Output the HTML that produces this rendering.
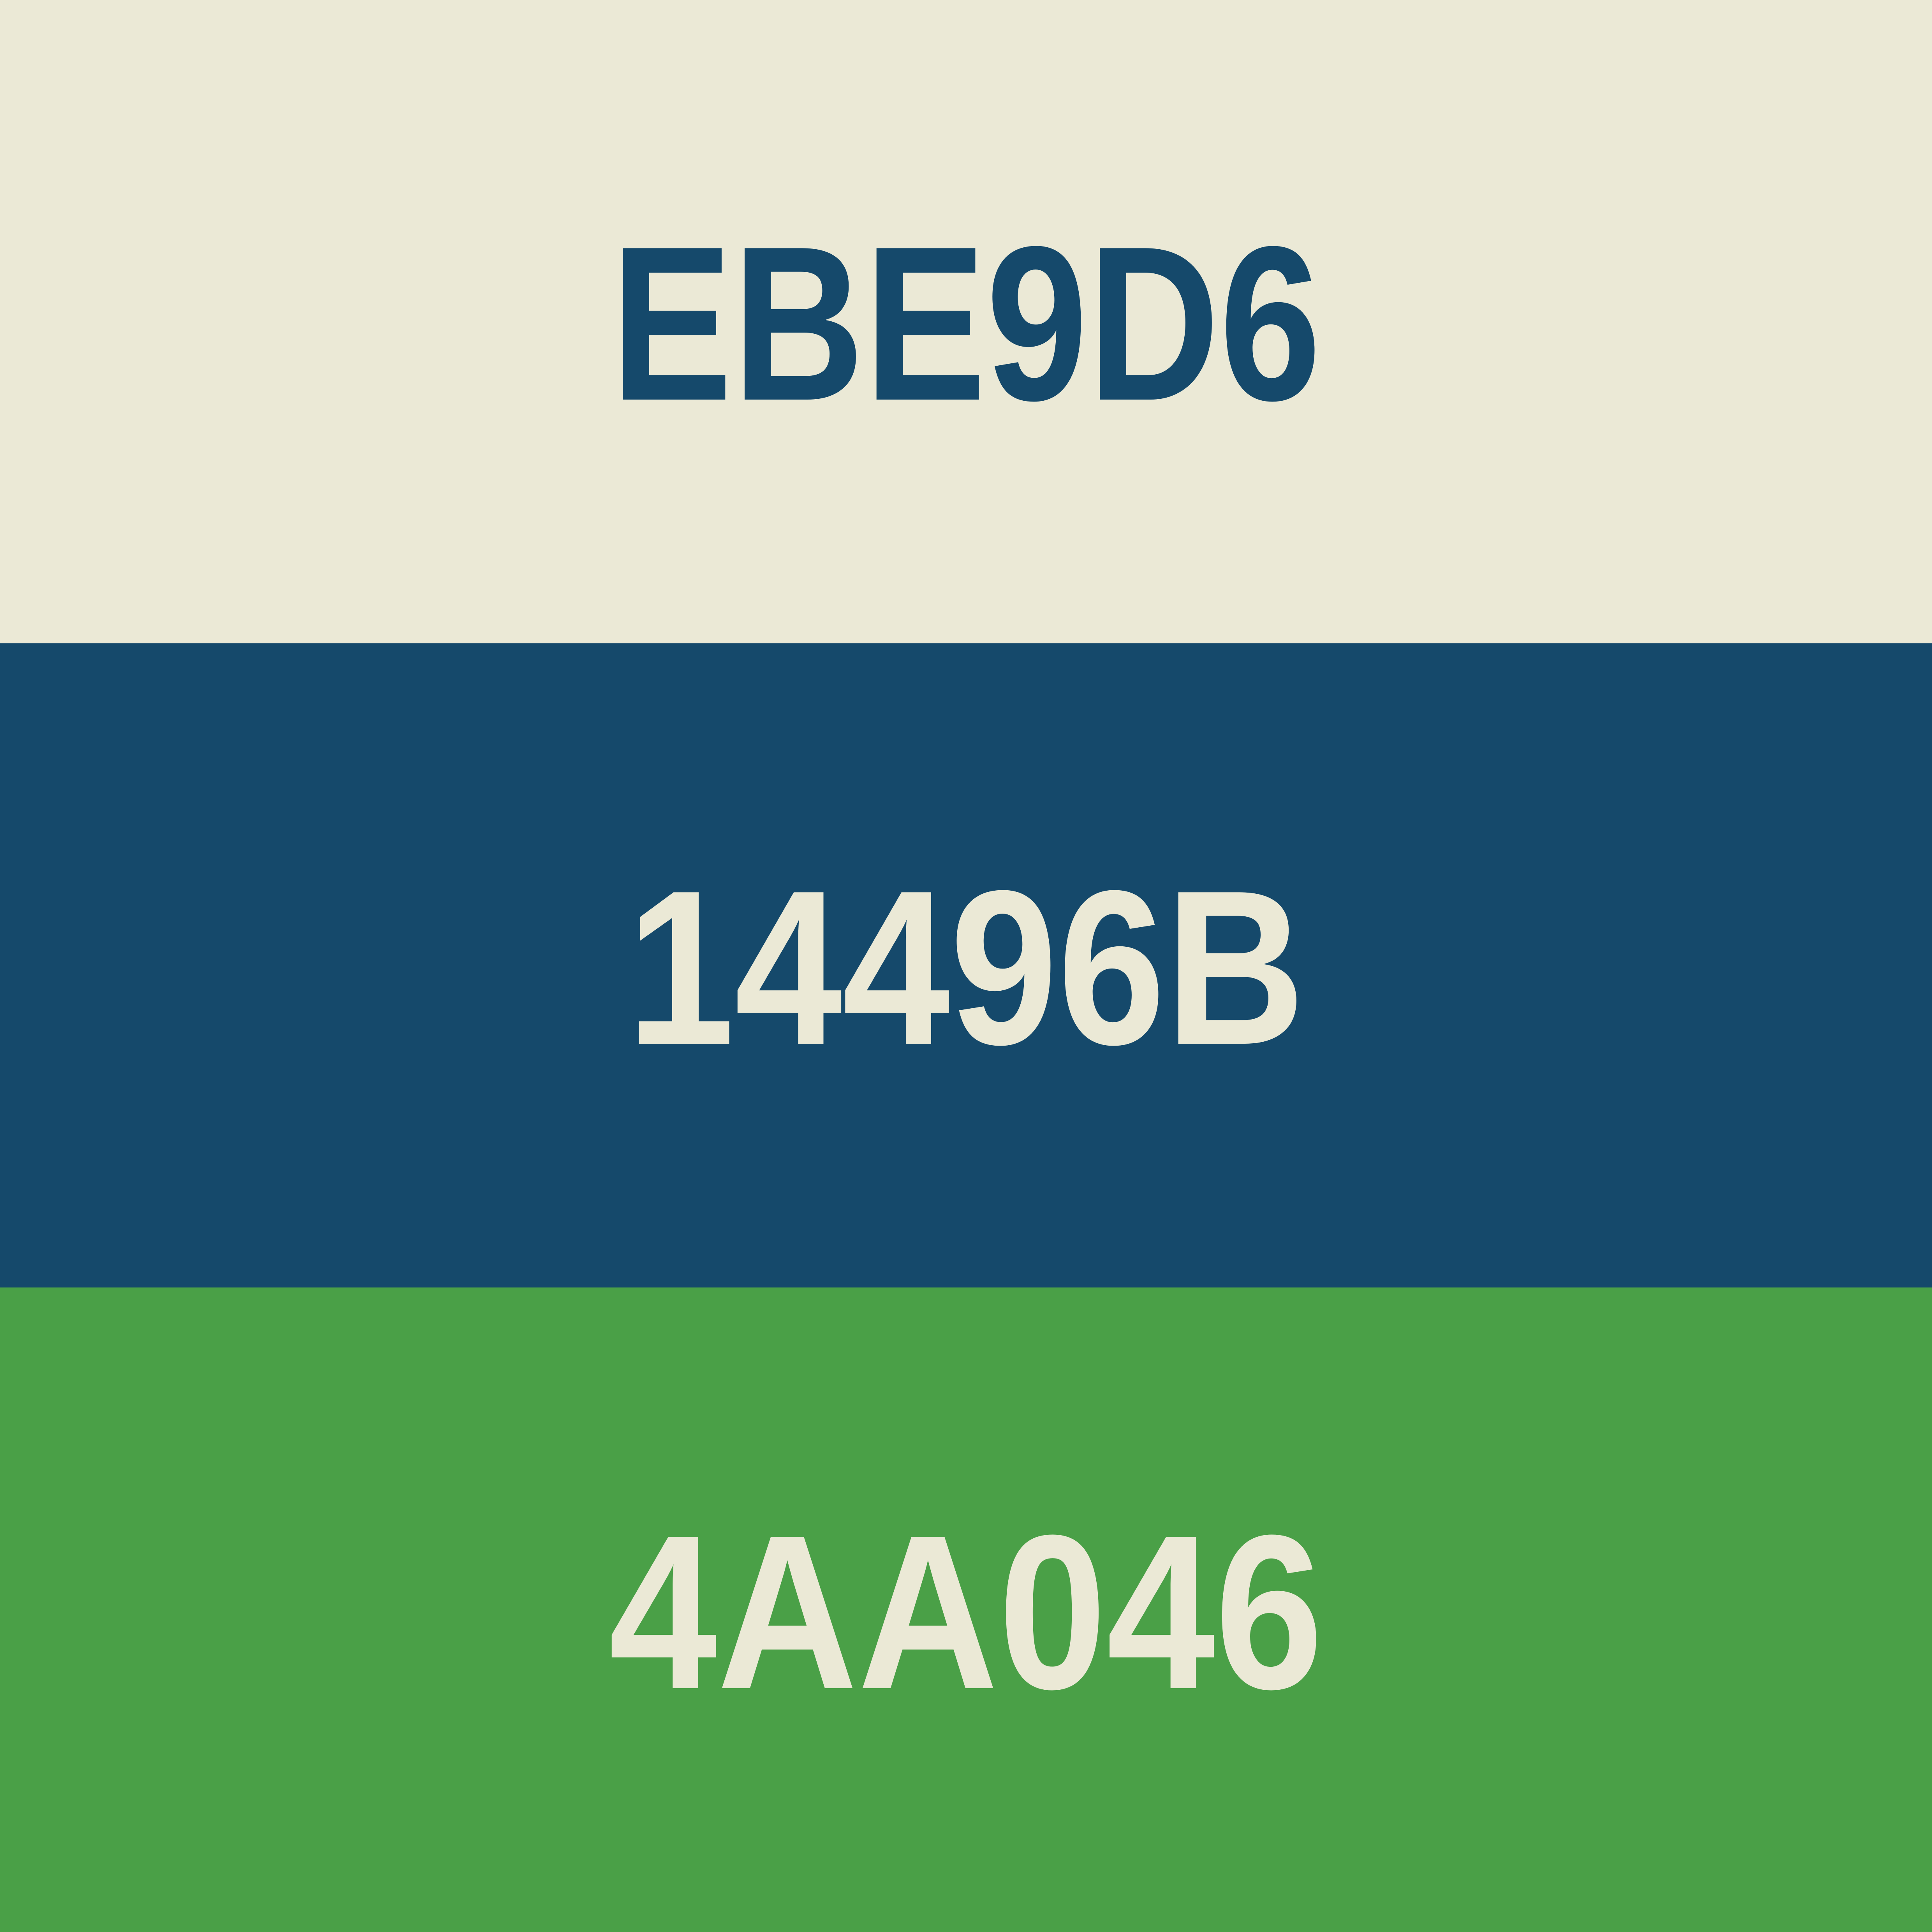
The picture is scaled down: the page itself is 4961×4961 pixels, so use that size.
<!DOCTYPE html>
<html><head><meta charset="utf-8"><style>
html,body{margin:0;padding:0;width:4961px;height:4961px;overflow:hidden;background:#EBE9D6}
.b{position:absolute;left:0;width:4961px}
.t{position:absolute;left:0;width:4961px;text-align:center;font-family:"Liberation Sans",sans-serif;font-weight:bold;font-size:565px;line-height:1}
.t span{display:inline-block;transform-origin:center}
</style></head><body>
<div class="b" style="top:0;height:1652px;background:#EBE9D6"></div>
<div class="b" style="top:1652px;height:1654px;background:#15496B"></div>
<div class="b" style="top:3306px;height:1655px;background:#4AA047"></div>
<div class="t" style="top:548px;color:#15496B"><span style="transform:scaleX(0.83)">EBE9D6</span></div>
<div class="t" style="top:2202px;color:#EBE9D6"><span style="transform:scaleX(0.88)">14496B</span></div>
<div class="t" style="top:3857px;color:#EBE9D6"><span style="transform:scaleX(0.885)">4AA046</span></div>
</body></html>
